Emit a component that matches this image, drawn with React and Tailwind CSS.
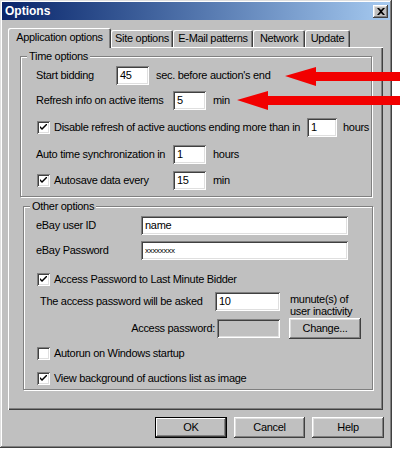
import React from "react";

const raised =
  "shadow-[inset_-1px_-1px_#404040,inset_1px_1px_#ffffff,inset_-2px_-2px_#808080,inset_2px_2px_#dfdfdf]";
const sunken =
  "shadow-[inset_1px_1px_#808080,inset_-1px_-1px_#ffffff,inset_2px_2px_#404040,inset_-2px_-2px_#dfdfdf]";

function Input({ w, value, disabled, small }) {
  return (
    <div
      className={`h-[19px] ${w} ${sunken} ${disabled ? "bg-[#c0c0c0]" : "bg-white"} flex items-center pl-[4px] shrink-0 ${small ? "text-[8px]" : ""}`}
    >
      {value}
    </div>
  );
}

function Check({ checked }) {
  return (
    <div className={`w-[13px] h-[13px] bg-white ${sunken} shrink-0 flex items-center justify-center`}>
      {checked && (
        <svg width="7" height="7" viewBox="0 0 7 7">
          <path d="M0 2 L0 4 L2 6 L7 1 L7 -1 L2 4 Z" fill="#000" />
        </svg>
      )}
    </div>
  );
}

function Button({ children, w, def }) {
  return (
    <div
      className={`${w} h-[21px] flex items-center justify-center bg-[#c0c0c0] ${
        def
          ? "shadow-[inset_0_0_0_1px_#000,inset_-2px_-2px_#404040,inset_2px_2px_#ffffff,inset_-3px_-3px_#808080]"
          : raised
      }`}
    >
      {children}
    </div>
  );
}

function Group({ title, className, children }) {
  return (
    <div
      className={`relative border border-[#808080] shadow-[inset_1px_1px_#ffffff,1px_1px_#ffffff] ${className}`}
    >
      <span className="absolute -top-[8px] left-[6px] px-[2px] bg-[#c0c0c0] leading-[14px]">{title}</span>
      {children}
    </div>
  );
}

function Tab({ label, selected, w }) {
  return (
    <div
      className={`${w} flex items-center justify-center bg-[#c0c0c0] rounded-t-[2px] ${
        selected
          ? "h-[20px] pb-[1px] shadow-[inset_1px_1px_#ffffff,inset_-1px_0_#404040,inset_-2px_0_#808080] relative z-10"
          : "h-[17px] mt-[2px] shadow-[inset_1px_1px_#ffffff,inset_-1px_0_#404040,inset_-2px_0_#808080]"
      }`}
    >
      {label}
    </div>
  );
}

export default function App() {
  return (
    <div className="w-[400px] h-[450px] bg-white relative overflow-hidden font-['Liberation_Sans',Arial,sans-serif] text-[11px] tracking-[-0.3px] whitespace-nowrap text-black leading-[13px]">
      <div className="w-[392px] h-[448px] bg-[#c0c0c0] p-[2px] flex flex-col shadow-[inset_-1px_-1px_#404040,inset_1px_1px_#dfdfdf,inset_-2px_-2px_#808080,inset_2px_2px_#ffffff]">
        {/* title bar */}
        <div className="h-[18px] flex items-center justify-between bg-gradient-to-r from-[#0a246a] to-[#a6caf0] px-[3px]">
          <span className="text-white font-bold text-[12px] tracking-normal">Options</span>
          <div className={`w-[15px] h-[13px] bg-[#c0c0c0] ${raised} flex items-center justify-center mr-[-1px]`}>
            <svg width="8" height="7" viewBox="0 0 8 7">
              <path d="M0 0 L2 0 L4 2 L6 0 L8 0 L5 3.5 L8 7 L6 7 L4 5 L2 7 L0 7 L3 3.5 Z" fill="#000" />
            </svg>
          </div>
        </div>

        {/* tabs */}
        <div className="flex items-start ml-[6px] mt-[8px] h-[19px]">
          <Tab label="Application options" selected w="w-[103px]" />
          <Tab label="Site options" w="w-[62px]" />
          <Tab label="E-Mail patterns" w="w-[80px]" />
          <Tab label="Network" w="w-[52px]" />
          <Tab label="Update" w="w-[45px]" />
        </div>

        {/* panel */}
        <div className="ml-[6px] w-[375px] h-[363px] shadow-[inset_1px_1px_#ffffff,inset_-1px_-1px_#404040,inset_-2px_-2px_#808080] pt-[9px] pl-[12px]">
          <Group title="Time options" className="w-[352px] h-[141px]">
            <div className="flex flex-col pl-[15px]">
              <div className="flex items-center h-[19px] mt-[9px]">
                <span className="w-[80px]">Start bidding</span>
                <Input w="w-[33px]" value="45" />
                <span className="ml-[7px]">sec. before auction's end</span>
              </div>
              <div className="flex items-center h-[19px] mt-[6px]">
                <span className="w-[137px]">Refresh info on active items</span>
                <Input w="w-[33px]" value="5" />
                <span className="ml-[7px]">min</span>
              </div>
              <div className="flex items-center h-[19px] mt-[8px]">
                <div className="ml-[1px]"><Check checked /></div>
                <span className="ml-[4px] w-[253px]">Disable refresh of active auctions ending more than in</span>
                <Input w="w-[30px]" value="1" />
                <span className="ml-[6px]">hours</span>
              </div>
              <div className="flex items-center h-[19px] mt-[8px]">
                <span className="w-[137px]">Auto time synchronization in</span>
                <Input w="w-[33px]" value="1" />
                <span className="ml-[7px]">hours</span>
              </div>
              <div className="flex items-center h-[19px] mt-[7px]">
                <div className="ml-[1px]"><Check checked /></div>
                <span className="ml-[4px] w-[119px]">Autosave data every</span>
                <Input w="w-[33px]" value="15" />
                <span className="ml-[7px]">min</span>
              </div>
            </div>
          </Group>

          <Group title="Other options" className="w-[350px] h-[184px] ml-[3px] mt-[9px]">
            <div className="flex flex-col pl-[12px]">
              <div className="flex items-center h-[19px] mt-[9px]">
                <span className="w-[105px]">eBay user ID</span>
                <Input w="w-[207px]" value="name" />
              </div>
              <div className="flex items-center h-[19px] mt-[6px]">
                <span className="w-[105px]">eBay Password</span>
                <Input w="w-[207px]" value="xxxxxxxx" small />
              </div>
              <div className="flex items-center h-[19px] mt-[10px]">
                <div className="ml-[1px]"><Check checked /></div>
                <span className="ml-[4px]">Access Password to Last Minute Bidder</span>
              </div>
              <div className="flex items-start h-[19px] mt-[3px]">
                <span className="ml-[4px] w-[175px] self-center">The access password will be asked</span>
                <Input w="w-[65px]" value="10" />
                <span className="ml-[10px] leading-[12px] mt-[1px]">
                  munute(s) of
                  <br />
                  user inactivity
                </span>
              </div>
              <div className="flex items-center h-[22px] mt-[6px]">
                <span className="w-[181px] text-right pr-[2px]">Access password:</span>
                <Input w="w-[63px]" value="" disabled />
                <div className="ml-[9px]">
                  <Button w="w-[72px]">Change...</Button>
                </div>
              </div>
              <div className="flex items-center h-[13px] mt-[8px]">
                <div className="ml-[1px]"><Check /></div>
                <span className="ml-[4px]">Autorun on Windows startup</span>
              </div>
              <div className="flex items-center h-[13px] mt-[12px]">
                <div className="ml-[1px]"><Check checked /></div>
                <span className="ml-[4px]">View background of auctions list as image</span>
              </div>
            </div>
          </Group>
        </div>

        {/* buttons */}
        <div className="flex justify-end gap-[7px] mt-[7px] pr-[6px]">
          <Button w="w-[72px]" def>OK</Button>
          <Button w="w-[71px]">Cancel</Button>
          <Button w="w-[72px]">Help</Button>
        </div>
      </div>

      {/* red arrows overlay */}
      <svg className="absolute left-0 top-0 pointer-events-none" width="400" height="450">
        <polygon points="285,76 316,67 316,72 400,72 400,81 316,81 316,86" fill="#f20000" />
        <polygon points="237,100 268,91 268,96 400,96 400,105 268,105 268,110" fill="#f20000" />
      </svg>
    </div>
  );
}
